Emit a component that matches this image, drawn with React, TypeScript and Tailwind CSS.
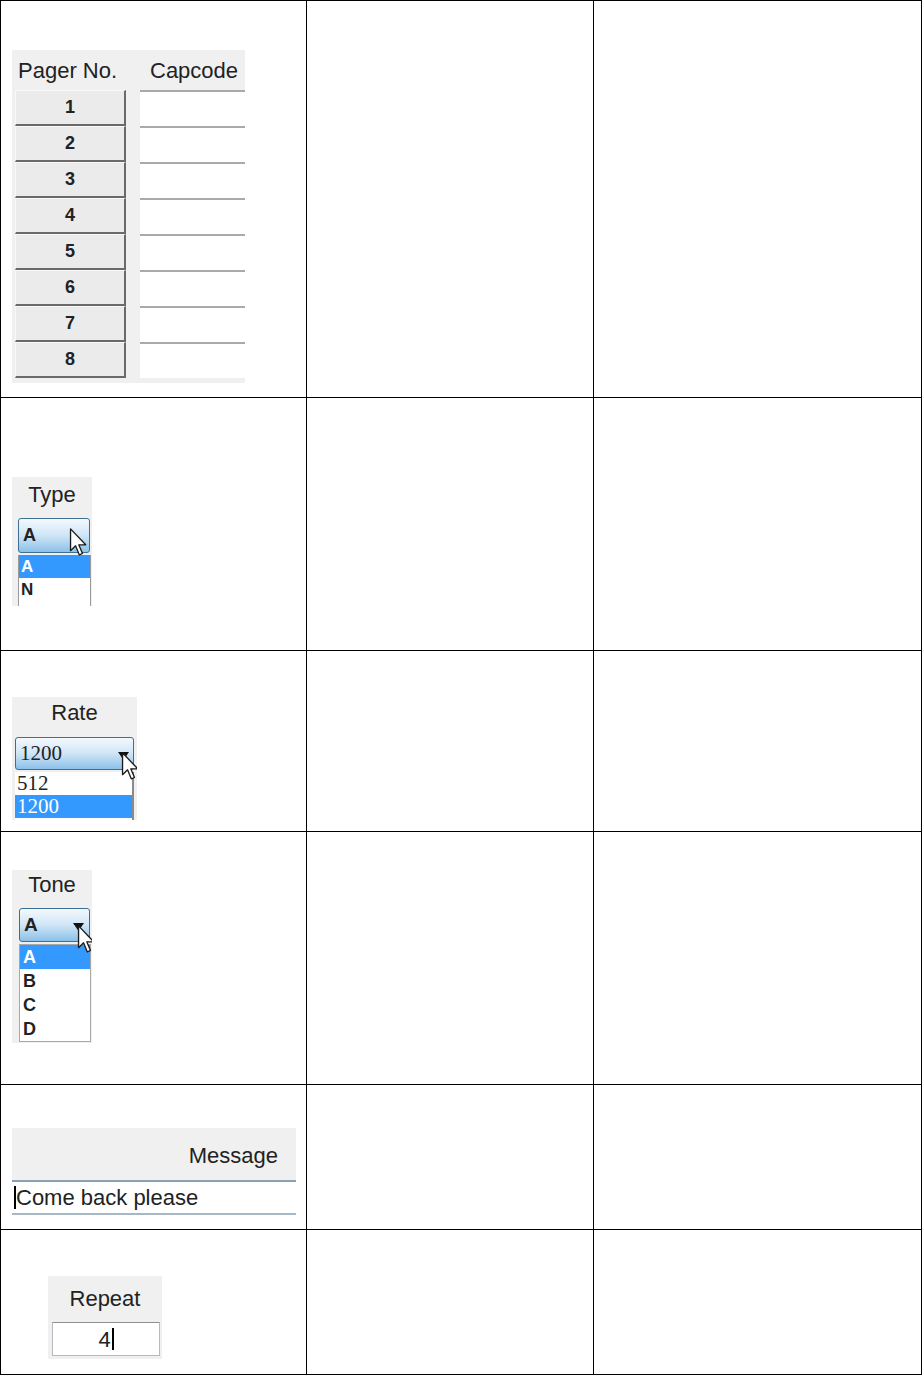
import React from 'react';

const sans = "font-['Liberation_Sans',Arial,sans-serif]";

const Cursor = ({ className }: { className: string }) => (
  <svg className={className} width="19" height="28" viewBox="0 0 12 19">
    <path
      d="M0.6 0.6 L0.6 15.4 L4 12.1 L6.5 18.2 L8.7 17.3 L6.2 11.4 L10.9 11.4 Z"
      fill="white"
      stroke="#1a1a1a"
      strokeWidth="0.9"
      strokeLinejoin="round"
    />
  </svg>
);

const Arrow = ({ className }: { className: string }) => (
  <svg className={className} width="11" height="8" viewBox="0 0 11 8">
    <path d="M0 0 L11 0 L5.5 8 Z" fill="#111" />
  </svg>
);

const pagers = [1, 2, 3, 4, 5, 6, 7, 8];

const PagerPanel = () => (
  <div className={`w-[233px] h-[333px] bg-[#f0f0f0] ${sans} text-[#222]`}>
    <div className="flex h-[40px] items-center text-[22px]">
      <span className="w-[138px] pl-[6px]">Pager No.</span>
      <span>Capcode</span>
    </div>
    {pagers.map((n) => (
      <div key={n} className="flex h-[36px] pl-[3px]">
        <div className="w-[111px] h-[36px] flex items-center justify-center bg-[#ebebeb] border-t border-l border-[#f8f8f8] border-b-2 border-r-2 border-b-[#6a6a6a] border-r-[#6a6a6a] font-bold text-[18px]">
          {n}
        </div>
        <div className="w-[14px]" />
        <div className="flex-1 bg-white border-t-2 border-[#a9a9a9]" />
      </div>
    ))}
  </div>
);

const Combo = ({ children, className }: { children: React.ReactNode; className: string }) => (
  <div
    className={`relative flex items-center px-[4px] border border-[#3a6f98] rounded-[3px] bg-linear-to-b from-[#f4f9fd] via-[#cfe5f6] to-[#8cc1e8] ${className}`}
  >
    {children}
  </div>
);

const TypePanel = () => (
  <div className={`relative w-[80px] h-[129px] bg-[#f0f0f0] overflow-hidden ${sans} text-[#222]`}>
    <div className="h-[41px] leading-[36px] text-center text-[22px]">Type</div>
    <Combo className="ml-[6px] w-[72px] h-[35px] font-bold text-[18px]">A</Combo>
    <div className="ml-[6px] mt-[2px] w-[73px] bg-white border-x border-[#9a9a9a] font-bold text-[17px]">
      <div className="h-[23px] pl-[2px] bg-[#3399ff] text-white leading-[23px]">A</div>
      <div className="h-[23px] pl-[2px] leading-[23px]">N</div>
      <div className="h-[23px]" />
    </div>
    <Cursor className="absolute left-[57px] top-[51px]" />
  </div>
);

const RatePanel = () => (
  <div className="relative w-[125px] h-[123px] bg-[#f0f0f0] overflow-hidden text-[#222]">
    <div className={`h-[40px] leading-[32px] text-center text-[22px] ${sans}`}>Rate</div>
    <Combo className="ml-[3px] w-[119px] h-[33px] font-['Liberation_Serif',serif] text-[21px]">
      1200
      <Arrow className="absolute left-[102px] top-[14px]" />
    </Combo>
    <div className="ml-[3px] mt-[2px] w-[119px] h-[48px] bg-white border-r-2 border-[#8a8a8a] font-['Liberation_Serif',serif] text-[21px]">
      <div className="h-[23px] pl-[2px] leading-[23px]">512</div>
      <div className="h-[23px] pl-[2px] leading-[23px] bg-[#3399ff] text-white">1200</div>
    </div>
    <Cursor className="absolute left-[109px] top-[55px]" />
  </div>
);

const TonePanel = () => (
  <div className={`relative w-[80px] h-[173px] bg-[#f0f0f0] overflow-hidden ${sans} text-[#222]`}>
    <div className="h-[38px] leading-[30px] text-center text-[22px]">Tone</div>
    <Combo className="ml-[7px] w-[71px] h-[34px] font-bold text-[19px]">
      A
      <Arrow className="absolute left-[53px] top-[14px]" />
    </Combo>
    <div className="ml-[7px] mt-[2px] w-[72px] bg-white border border-[#a8a8a8] font-bold text-[18px]">
      {['A', 'B', 'C', 'D'].map((t, i) => (
        <div
          key={t}
          className={`h-[24px] pl-[3px] leading-[24px] ${i === 0 ? 'bg-[#3399ff] text-white' : ''}`}
        >
          {t}
        </div>
      ))}
    </div>
    <Cursor className="absolute left-[65px] top-[55px]" />
  </div>
);

const MessagePanel = () => (
  <div className={`w-[284px] ${sans} text-[#222]`}>
    <div className="h-[52px] bg-[#f0f0f0] flex items-center justify-end pr-[18px] pt-[2px] text-[22px]">
      Message
    </div>
    <div className="h-[2px] bg-[#8aa0b4]" />
    <div className="h-[31px] bg-white flex items-center pl-[2px] text-[22px]">
      <span className="inline-block w-[2px] h-[23px] bg-black" />
      Come back please
    </div>
    <div className="h-[2px] bg-[#a6b7c6]" />
  </div>
);

const RepeatPanel = () => (
  <div className={`w-[114px] h-[83px] bg-[#f0f0f0] ${sans} text-[#222]`}>
    <div className="h-[46px] leading-[46px] text-center text-[22px]">Repeat</div>
    <div className="ml-[4px] w-[108px] h-[34px] bg-white border border-[#b5b9c0] border-t-[#8c8f94] flex items-center justify-center text-[22px]">
      4
      <span className="inline-block w-[2px] h-[22px] bg-black ml-[1px]" />
    </div>
  </div>
);

const Cell = ({ children, className = '' }: { children?: React.ReactNode; className?: string }) => (
  <div className={`border-r border-b border-black ${className}`}>{children}</div>
);

export default function App() {
  return (
    <div className="w-[922px] h-[1375px] bg-white">
      <div className="w-[922px] border-l border-t border-black grid grid-cols-[306px_287px_328px] grid-rows-[397px_253px_181px_253px_145px_145px]">
        <Cell className="pt-[49px] pl-[11px]">
          <PagerPanel />
        </Cell>
        <Cell />
        <Cell />

        <Cell className="pt-[79px] pl-[11px]">
          <TypePanel />
        </Cell>
        <Cell />
        <Cell />

        <Cell className="pt-[46px] pl-[11px]">
          <RatePanel />
        </Cell>
        <Cell />
        <Cell />

        <Cell className="pt-[38px] pl-[11px]">
          <TonePanel />
        </Cell>
        <Cell />
        <Cell />

        <Cell className="pt-[43px] pl-[11px]">
          <MessagePanel />
        </Cell>
        <Cell />
        <Cell />

        <Cell className="pt-[46px] pl-[47px]">
          <RepeatPanel />
        </Cell>
        <Cell />
        <Cell />
      </div>
    </div>
  );
}
